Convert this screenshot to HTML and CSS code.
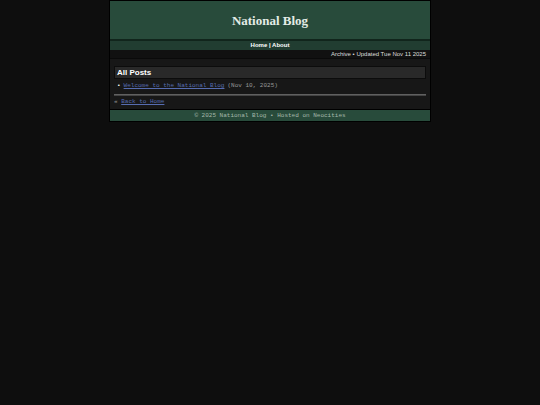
FILE: index.html
```html
<!DOCTYPE html>
<html lang="en">
  <head>
    <meta charset="UTF-8" />
    <meta name="viewport" content="width=device-width, initial-scale=1.0" />
    <title>All Posts - National Blog</title>
    <link rel="stylesheet" href="styles.css">
  </head>
  <body>
    <div class="wrapper">
      <header class="header">
        <h1 class="site-title">National Blog</h1>
      </header>
      <nav class="nav">
        <a href="#home">Home</a> | <a href="#about">About</a>
      </nav>
      <div class="status">Archive • Updated Tue Nov 11 2025</div>
      <main class="content">
        <h2 class="section-title">All Posts</h2>
        <ul class="post-list">
          <li><a href="#welcome">Welcome to the National Blog</a> <span class="post-date">(Nov 10, 2025)</span></li>
        </ul>
        <hr class="divider" />
        <p class="back">« <a href="#home">Back to Home</a></p>
      </main>
      <footer class="footer">© 2025 National Blog • Hosted on Neocities</footer>
    </div>
  </body>
</html>
```

FILE: styles.css
```css
body {
  margin: 0;
  background-color: #0e0e0e;
  color: #dddddd;
  font-family: "Liberation Mono", "Courier New", monospace;
  font-size: 6px;
  line-height: 8px;
}

a {
  color: #566cb0;
}

.wrapper {
  max-width: 320px;
  margin: 0 auto;
  background-color: #171717;
  border: 1px solid #000000;
}

/* Header */
.header {
  padding: 12px 4px 10px;
  background-color: #284b3b;
  border-bottom: 2px solid #11251c;
  text-align: center;
}

.site-title {
  margin: 0;
  color: #e4ece6;
  font-family: "Liberation Serif", "Times New Roman", serif;
  font-size: 13px;
  line-height: 16px;
}

.nav {
  padding: 0 4px 1px;
  background-color: #213d31;
  color: #ffffff;
  font-family: "Liberation Sans", Arial, sans-serif;
  font-weight: bold;
  text-align: center;
}

.nav a {
  color: #ffffff;
  text-decoration: none;
}

.status {
  padding: 0 4px;
  background-color: #111111;
  border-bottom: 1px solid #0a0a0a;
  font-family: "Liberation Sans", Arial, sans-serif;
  text-align: right;
}

/* Posts */
.content {
  padding: 7px 4px 3px;
}

.section-title {
  margin: 0;
  padding: 0 2px;
  background-color: #292929;
  border: 1px solid #0c0c0c;
  color: #ffffff;
  font-family: "Liberation Sans", Arial, sans-serif;
  font-size: 8px;
  line-height: 11px;
}

.post-list {
  margin: 3px 0 4px;
  padding-left: 3px;
  list-style: none;
}

.post-list li {
  display: flex;
  gap: 3px;
}

.post-list li::before {
  content: "•";
  color: #ffffff;
}

.post-date {
  color: #999999;
}

.divider {
  margin: 0;
  border: 0;
  border-top: 1px solid #606060;
  border-bottom: 1px solid #444444;
}

.back {
  margin: 2px 0 0;
  color: #999999;
}

.footer {
  padding: 2px 4px 1px;
  background-color: #284b3b;
  border-top: 1px solid #000000;
  color: #a6b8ab;
  text-align: center;
}
```
